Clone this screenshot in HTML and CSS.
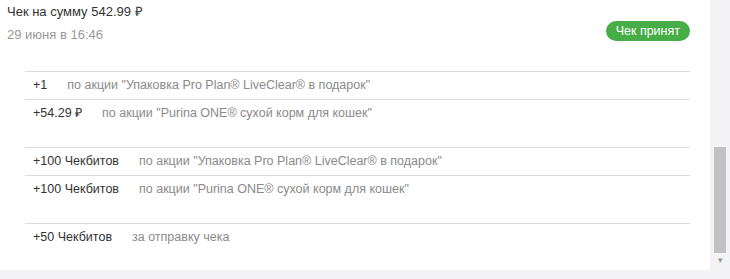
FILE: index.html
```html
<!DOCTYPE html>
<html lang="ru">

<head>
    <meta charset="UTF-8">
    <title>Чек на сумму 542.99 ₽</title>
    <link rel="stylesheet" href="styles.css">
</head>

<body>
    <div class="page">
        <div class="receipt">
            <div class="receipt-head">
                <div>
                    <div class="receipt-title">Чек на сумму 542.99 ₽</div>
                    <div class="receipt-date">29 июня в 16:46</div>
                </div>
                <span class="badge">Чек принят</span>
            </div>

            <!-- bonus groups -->
            <div class="group">
                <div class="row"><span class="amount">+1</span><span class="reason">по акции "Упаковка Pro Plan® LiveClear® в подарок"</span></div>
                <div class="row"><span class="amount">+54.29 ₽</span><span class="reason">по акции "Purina ONE® сухой корм для кошек"</span></div>
            </div>

            <div class="group">
                <div class="row"><span class="amount">+100 Чекбитов</span><span class="reason">по акции "Упаковка Pro Plan® LiveClear® в подарок"</span></div>
                <div class="row"><span class="amount">+100 Чекбитов</span><span class="reason">по акции "Purina ONE® сухой корм для кошек"</span></div>
            </div>

            <div class="group">
                <div class="row"><span class="amount">+50 Чекбитов</span><span class="reason">за отправку чека</span></div>
            </div>
        </div>

        <div class="scrollbar">
            <div class="track"></div>
            <div class="thumb"></div>
            <div class="arrow">&#9662;</div>
        </div>
    </div>
</body>

</html>
```

FILE: styles.css
```css
body {
    margin: 0;
    background: #f3f3f6;
    font-family: "Liberation Sans", Arial, sans-serif;
    color: #333;
}

.page {
    display: flex;
    height: 279px;
}

.receipt {
    width: 690px;
    height: 251px;
    padding: 0 20px 19px 0;
    background: #fff;
}

.receipt-head {
    display: flex;
    justify-content: space-between;
    align-items: flex-start;
    height: 71px;
    padding-left: 7px;
}

.receipt-title {
    font-size: 13px;
    line-height: 23px;
}

.receipt-date {
    font-size: 13px;
    line-height: 23px;
    color: #999;
}

.badge {
    margin-top: 21px;
    height: 20px;
    line-height: 20px;
    padding: 0 10px;
    border-radius: 10px;
    background: #47ad47;
    color: #fff;
    font-size: 12.5px;
}

.group {
    margin-left: 25px;
    margin-bottom: 20px;
}

.row {
    display: flex;
    height: 27px;
    line-height: 26px;
    border-top: 1px solid #dcdcdc;
    padding-left: 8px;
    font-size: 12.5px;
}

.amount {
    margin-right: 20px;
    color: #333;
}

.reason {
    color: #8a8a8a;
}

.scrollbar {
    width: 20px;
    display: flex;
    flex-direction: column;
    align-items: center;
}

.track {
    height: 147px;
}

.thumb {
    width: 12px;
    height: 106px;
    background: #c2c2c2;
}

.arrow {
    font-size: 9px;
    color: #999;
    line-height: 14px;
}
```
